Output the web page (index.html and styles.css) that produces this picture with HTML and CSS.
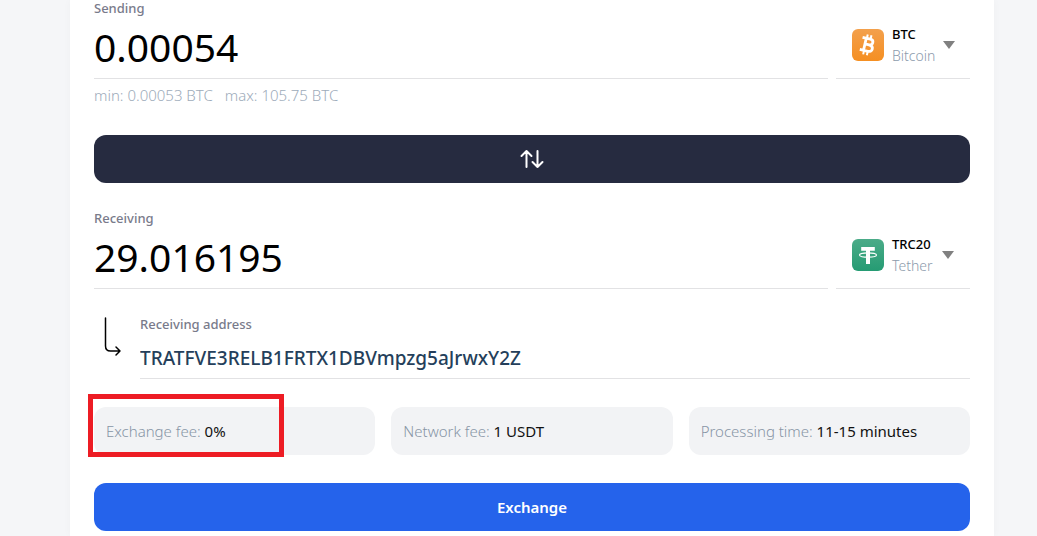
FILE: index.html
```html
<!DOCTYPE html>
<html lang="en">
<head>
  <meta charset="UTF-8" />
  <meta name="viewport" content="width=device-width, initial-scale=1.0" />
  <title>Exchange</title>
  <link rel="stylesheet" href="styles.css">
</head>
<body>
  <main class="page">
    <form class="exchange-card">
      <div class="amount-row">
        <div class="field">
          <label for="sending">Sending</label>
          <input class="amount" id="sending" type="text" value="0.00054" />
        </div>
        <button class="currency" type="button" aria-haspopup="listbox">
          <svg class="coin" viewBox="0 0 32 32" aria-hidden="true">
            <defs>
              <linearGradient id="btc-bg" x1="0" y1="0" x2="0" y2="1">
                <stop offset="0" stop-color="#f3a04c" />
                <stop offset="1" stop-color="#f58f22" />
              </linearGradient>
            </defs>
            <rect width="32" height="32" rx="6" fill="url(#btc-bg)" />
            <g transform="rotate(13 16 16)" fill="none" stroke="#fff">
              <path stroke-width="2.8" d="M12.800 9.800v12.400M9 9.800h8c4.200 0 4.200 5.800 0 5.800h-4M17 15.600c5.400 0 5.400 6.600.2 6.600H9" />
              <path stroke-width="2" d="M13.400 5.800v3.600M17.200 5.800v3.600M13.400 22.600v3.600M17.200 22.600v3.600" />
            </g>
          </svg>
          <span class="coin-text">
            <span class="ticker">BTC</span>
            <span class="coin-name">Bitcoin</span>
          </span>
          <svg class="caret" viewBox="0 0 12 8" aria-hidden="true"><path d="M0 0h12L6 8z" /></svg>
        </button>
      </div>
      <div class="limits">
        <span>min: 0.00053 BTC</span>
        <span>max: 105.75 BTC</span>
      </div>

      <button class="swap" type="button" aria-label="Swap currencies">
        <svg viewBox="0 0 24 20" aria-hidden="true">
          <path d="M6.500 18V2M1.500 7l5-5 5 5M17.500 2v16M12.500 13l5 5 5-5" />
        </svg>
      </button>

      <div class="amount-row">
        <div class="field">
          <label for="receiving">Receiving</label>
          <input class="amount" id="receiving" type="text" value="29.016195" />
        </div>
        <button class="currency" type="button" aria-haspopup="listbox">
          <svg class="coin" viewBox="0 0 32 32" aria-hidden="true">
            <defs>
              <linearGradient id="usdt-bg" x1="0" y1="0" x2="0" y2="1">
                <stop offset="0" stop-color="#4bab88" />
                <stop offset="1" stop-color="#259b73" />
              </linearGradient>
            </defs>
            <rect width="32" height="32" rx="6" fill="url(#usdt-bg)" />
            <path fill="#fff" d="M9.200 8h13.600v3.700h-4.800V25h-4V11.700H9.200z" />
            <ellipse cx="16" cy="16" rx="8.500" ry="2.200" fill="none" stroke="#fff" stroke-width="1.200" />
          </svg>
          <span class="coin-text">
            <span class="ticker">TRC20</span>
            <span class="coin-name">Tether</span>
          </span>
          <svg class="caret" viewBox="0 0 12 8" aria-hidden="true"><path d="M0 0h12L6 8z" /></svg>
        </button>
      </div>

      <div class="address-row">
        <svg class="address-arrow" viewBox="0 0 18 40" aria-hidden="true">
          <path d="M1.500 1v28q0 5 5 5H16M12 30l4 4-4 4" />
        </svg>
        <div class="field">
          <label for="address">Receiving address</label>
          <input class="address" id="address" type="text" value="TRATFVE3RELB1FRTX1DBVmpzg5aJrwxY2Z" />
        </div>
      </div>

      <div class="fees">
        <div class="fee highlighted">Exchange fee: <span>0%</span></div>
        <div class="fee">Network fee: <span>1 USDT</span></div>
        <div class="fee">Processing time: <span>11-15 minutes</span></div>
      </div>

      <button class="submit" type="submit">Exchange</button>
    </form>
  </main>
</body>
</html>
```

FILE: styles.css
```css
*,
*::after {
  box-sizing: border-box;
}

body {
  margin: 0;
  background-color: #f5f6f8;
  color: #000;
  font-family: 'Segoe UI', 'Noto Sans', 'Open Sans', sans-serif;
  font-size: 15px;
}

button,
input {
  font-family: inherit;
  border: none;
  margin: 0;
  padding: 0;
}

button {
  cursor: pointer;
}

.page {
  min-height: 100vh;
  padding: 0 43px 0 70px;
  display: flex;
}

.exchange-card {
  flex: 1;
  min-width: 0;
  padding: 0 24px 5px;
  background-color: #fff;
  box-shadow: 0 0 8px rgba(0, 0, 0, 0.03);
}

.amount-row {
  display: flex;
  align-items: flex-end;
  gap: 8px;
}

.field {
  flex: 1;
  min-width: 0;
  display: flex;
  flex-direction: column;
}

label {
  color: #797b8b;
  font-size: 13px;
  font-weight: 500;
  line-height: 16px;
}

.field input {
  width: 100%;
  background: none;
  border-bottom: 1px solid #e2e2e4;
  outline: none;
}

.amount {
  height: 63px;
  padding-bottom: 2px;
  color: #000;
  font-size: 39px;
  font-weight: 400;
}

.currency {
  width: 134px;
  height: 67px;
  padding: 0 16px;
  display: flex;
  align-items: center;
  gap: 8px;
  background: none;
  border-bottom: 1px solid #e2e2e4;
  text-align: left;
}

.coin {
  width: 32px;
  height: 32px;
  flex: none;
}

.coin-text {
  flex: 1;
  display: flex;
  flex-direction: column;
  font-size: 13px;
  line-height: 22px;
}

.ticker {
  color: #000;
  font-weight: 500;
}

.coin-name {
  color: #8c9bac;
  font-size: 14px;
  font-weight: 300;
}

.caret {
  width: 12px;
  height: 8px;
  flex: none;
  fill: #808080;
}

.limits {
  display: flex;
  gap: 12px;
  padding-top: 5px;
  color: #9dabba;
  font-weight: 300;
  line-height: 22px;
}

.swap,
.submit {
  width: 100%;
  height: 48px;
  display: flex;
  align-items: center;
  justify-content: center;
  border-radius: 12px;
  color: #fff;
}

.swap {
  margin: 29px 0 27px;
  background-color: #262b40;
}

.swap svg {
  width: 24px;
  height: 20px;
  fill: none;
  stroke: #fff;
  stroke-width: 2;
  stroke-linecap: round;
  stroke-linejoin: round;
}

.address-row {
  display: flex;
  gap: 18px;
  margin-top: 27px;
  padding-left: 10px;
}

.address-arrow {
  width: 18px;
  height: 40px;
  flex: none;
  margin-top: 1px;
  fill: none;
  stroke: #000;
  stroke-width: 1.5;
  stroke-linecap: round;
  stroke-linejoin: round;
}

.address {
  height: 47px;
  padding-top: 6px;
  color: #253f5b;
  font-size: 19px;
  font-weight: 500;
}

.fees {
  display: grid;
  grid-template-columns: repeat(3, 1fr);
  gap: 16px;
  margin: 28px 0;
}

.fee {
  position: relative;
  padding: 13px 12px;
  border-radius: 12px;
  background-color: #f2f3f5;
  color: #8795a5;
  font-weight: 300;
  line-height: 22px;
}

.fee span {
  color: #111;
  font-weight: 400;
}

.highlighted::after {
  content: '';
  position: absolute;
  top: -13px;
  left: -6px;
  width: 196px;
  height: 63px;
  border: 5px solid #ed1c24;
}

.submit {
  background-color: #2563eb;
  font-size: 15px;
  font-weight: 600;
}
```
